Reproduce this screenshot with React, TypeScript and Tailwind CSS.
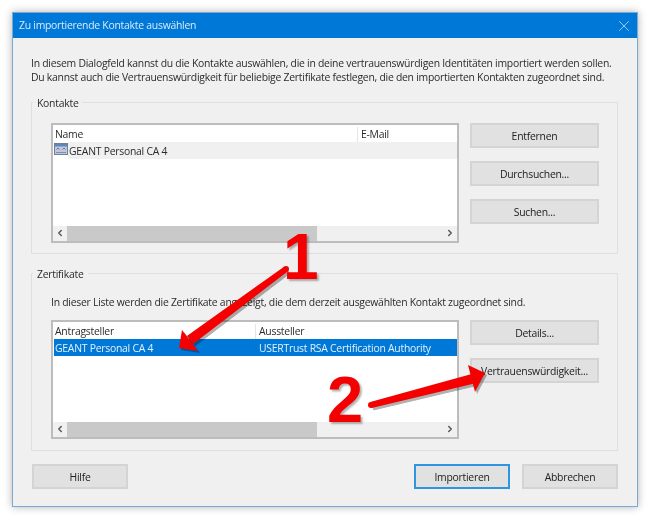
import { ReactNode } from 'react';
import { X, ChevronLeft, ChevronRight } from 'lucide-react';

function Btn({ children, className = 'border-[#d4d4d4]' }: { children: ReactNode; className?: string }) {
  return (
    <button className={`flex h-[25px] items-center justify-center border-2 bg-[#e1e1e1] pt-[3px] text-[#222] ${className}`}>
      {children}
    </button>
  );
}

function Scrollbar() {
  return (
    <div className="flex h-[15px] shrink-0 items-center bg-[#f0f0f0]">
      <div className="flex w-[14px] justify-center">
        <ChevronLeft size={10} strokeWidth={3.5} className="text-[#555]" />
      </div>
      <div className="h-full w-[250px] bg-[#c9c9c9]" />
      <div className="flex-1" />
      <div className="flex w-[14px] justify-center">
        <ChevronRight size={10} strokeWidth={3.5} className="text-[#555]" />
      </div>
    </div>
  );
}

function CertIcon() {
  return (
    <svg width="14" height="12" viewBox="0 0 14 12" className="mb-[3px] shrink-0">
      <rect x="0.5" y="0.5" width="13" height="11" fill="#b9cbe2" stroke="#6d7f99" />
      <rect x="1" y="1" width="12" height="2.5" fill="#5f86b8" />
      <path d="M2.5 6.5l1.5-1.5 1.5 1.5M8.5 6.5l1.5-1.5 1.5 1.5" fill="none" stroke="#c0506a" />
      <path d="M2 9.5h10" stroke="#7f8fa8" />
    </svg>
  );
}

function ListBox({ cols, first, height, children }: { cols: string[]; first: number; height: string; children: ReactNode }) {
  return (
    <div className={`flex w-[408px] shrink-0 flex-col border-2 border-[#bcbcbc] bg-white ${height}`}>
      <div className="flex h-[17px] shrink-0 items-center pt-[2px]">
        <div style={{ width: first }} className="pl-[2px]">{cols[0]}</div>
        <div className="h-full border-l border-[#e5e5e5] pl-[3px] leading-[15px]">{cols[1]}</div>
      </div>
      <div className="flex-1">{children}</div>
      <Scrollbar />
    </div>
  );
}

function GroupBox({ title, className, children }: { title: string; className: string; children: ReactNode }) {
  return (
    <div className={`relative w-[587px] border border-[#dfdfdf] ${className}`}>
      <span className="absolute left-[1px] top-[-8px] bg-[#f0f0f0] px-[4px] leading-[16px]">{title}</span>
      {children}
    </div>
  );
}

export default function App() {
  return (
    <div className="relative h-[519px] w-[650px] overflow-hidden bg-white text-[10.4px] tracking-[-0.25px] text-[#2b2b2b] blur-[0.35px] [font-family:'Open_Sans',sans-serif]">
      <div className="p-[12px]">
        <div className="flex h-[495px] w-[626px] flex-col border border-[#7aa9d4] bg-[#f0f0f0] shadow-[0_0_8px_rgba(0,0,0,0.3)]">
          <div className="flex h-[25px] shrink-0 items-center justify-between bg-[#0078d7] pl-[6px] pr-[4px] pt-[1px] text-[#d9ebf9]">
            <span>Zu importierende Kontakte auswählen</span>
            <X size={18} strokeWidth={1} className="text-[#cfe6f8]" />
          </div>

          <div className="flex-1 px-[18px] pt-[18px]">
            <p className="whitespace-nowrap leading-[14.4px]">
              In diesem Dialogfeld kannst du die Kontakte auswählen, die in deine vertrauenswürdigen Identitäten importiert werden sollen.
              <br />
              Du kannst auch die Vertrauenswürdigkeit für beliebige Zertifikate festlegen, die den importierten Kontakten zugeordnet sind.
            </p>

            <GroupBox title="Kontakte" className="mt-[17px] h-[152px]">
              <div className="flex gap-[11px] pl-[19px] pt-[20px]">
                <ListBox cols={['Name', 'E-Mail']} first={304} height="h-[120px]">
                  <div className="flex h-[17px] items-center pl-[1px]">
                    <CertIcon />
                    <div className="flex h-full flex-1 items-center bg-[#f0f0f0] pl-[1px] pt-[2px]">GEANT Personal CA 4</div>
                  </div>
                </ListBox>
                <div className="flex w-[129px] flex-col gap-[13px]">
                  <Btn>Entfernen</Btn>
                  <Btn>Durchsuchen...</Btn>
                  <Btn>Suchen...</Btn>
                </div>
              </div>
            </GroupBox>

            <GroupBox title="Zertifikate" className="mt-[19px] h-[178px]">
              <p className="whitespace-nowrap pl-[19px] pt-[20px] leading-[16px]">
                In dieser Liste werden die Zertifikate angezeigt, die dem derzeit ausgewählten Kontakt zugeordnet sind.
              </p>
              <div className="flex gap-[11px] pl-[19px] pt-[10px]">
                <ListBox cols={['Antragsteller', 'Aussteller']} first={202} height="h-[119px]">
                  <div className="ml-[1px] flex h-[17px] items-center whitespace-nowrap bg-[#0078d7] pt-[2px] text-[#e4f1fb]">
                    <div className="w-[201px] pl-[1px]">GEANT Personal CA 4</div>
                    <div className="pl-[4px]">USERTrust RSA Certification Authority</div>
                  </div>
                </ListBox>
                <div className="flex w-[129px] flex-col gap-[13px]">
                  <Btn>Details...</Btn>
                  <Btn>Vertrauenswürdigkeit...</Btn>
                </div>
              </div>
            </GroupBox>

            <div className="mt-[13px] flex w-[587px] gap-[12px] pl-[1px]">
              <Btn className="w-[96px] border-[#d4d4d4]">Hilfe</Btn>
              <Btn className="ml-auto w-[96px] border-[#2f95df]">Importieren</Btn>
              <Btn className="w-[96px] border-[#d4d4d4]">Abbrechen</Btn>
            </div>
          </div>
        </div>
      </div>

      {/* annotations drawn over the dialog */}
      <svg width="650" height="519" className="pointer-events-none absolute left-0 top-0">
        <g fill="#000" opacity="0.3" transform="translate(2 2)">
          <path d="M287.9 271.3L284.1 266.7L186.9 336.1L193.1 343.9Z" stroke="#000" strokeWidth="1" />
          <path d="M179 348L182 330L198 351Z" />
          <path d="M371.75 407.9L370.25 402.1L470.75 374.15L473.25 383.85Z" stroke="#000" strokeWidth="1" />
          <path d="M485 373L468 365L475 392Z" />
        </g>
        <g fill="#f40000">
          <path d="M287.9 271.3L284.1 266.7L186.9 336.1L193.1 343.9Z" />
          <circle cx="286" cy="269" r="3" />
          <path d="M179 348L182 330L198 351Z" />
          <path d="M371.75 407.9L370.25 402.1L470.75 374.15L473.25 383.85Z" />
          <circle cx="371" cy="405" r="3" />
          <path d="M485 373L468 365L475 392Z" />
        </g>
      </svg>
      <span className="absolute left-[283px] top-[217px] text-[64px] font-bold leading-[80px] tracking-normal text-[#f40000] [font-family:'Liberation_Sans',sans-serif] [text-shadow:2px_2px_2px_rgba(0,0,0,0.3)]">1</span>
      <span className="absolute left-[327px] top-[360px] text-[65px] font-bold leading-[80px] tracking-normal text-[#f40000] [font-family:'Liberation_Sans',sans-serif] [text-shadow:2px_2px_2px_rgba(0,0,0,0.3)]">2</span>
    </div>
  );
}
